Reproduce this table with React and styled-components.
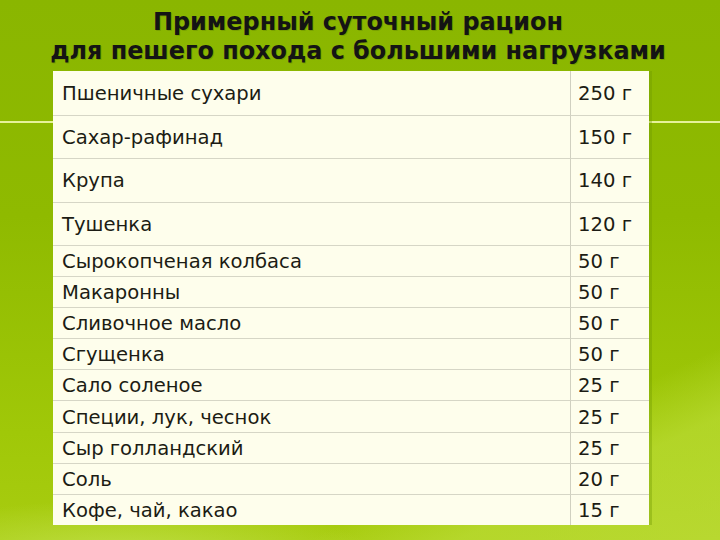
import React from "react";
import styled, { createGlobalStyle } from "styled-components";

const Global = createGlobalStyle`
  html, body { margin: 0; padding: 0; }
  body { width: 720px; height: 540px; overflow: hidden; }
`;

const Page = styled.div`
  width: 720px;
  height: 540px;
  box-sizing: border-box;
  padding-top: 8px;
  display: flex;
  flex-direction: column;
  background:
    linear-gradient(to bottom, transparent 121px, rgba(240, 248, 170, 0.9) 121px, rgba(240, 248, 170, 0.9) 123px, transparent 123px),
    radial-gradient(ellipse 260px 60px at 120px 560px, rgba(200, 230, 90, 0.75), transparent),
    linear-gradient(155deg, transparent 78%, rgba(190, 222, 60, 0.6) 86%, rgba(200, 228, 80, 0.5) 100%),
    linear-gradient(180deg, #8ab600 0%, #8fba00 40%, #a0c808 80%, #a8cc10 100%);
  font-family: "DejaVu Sans", Verdana, sans-serif;
`;

const Title = styled.h1`
  margin: 0;
  width: 716px;
  font-family: "DejaVu Sans", Verdana, sans-serif;
  font-weight: bold;
  font-size: 23.9px;
  line-height: 29px;
  text-align: center;
  color: #141414;
  text-shadow: 1px 1px 0 rgba(70, 95, 0, 0.25);
`;

const Table = styled.div`
  margin: 5px 0 0 53px;
  width: 596px;
  background: #fefeec;
  display: grid;
  grid-template-columns: 517px 79px;
  box-shadow: 3px 0 0 rgba(110, 150, 0, 0.35);
`;

const Cell = styled.div`
  height: ${(p) => p.$h}px;
  box-sizing: border-box;
  display: flex;
  align-items: center;
  padding-left: ${(p) => (p.$value ? 7 : 9)}px;
  padding-top: 1px;
  font-size: 19.6px;
  color: #1c1c14;
  white-space: nowrap;
  border-top: ${(p) => (p.$first ? "none" : "1px solid #d6d6c6")};
  border-left: ${(p) => (p.$value ? "1px solid #d0d0c0" : "none")};
`;

const rows = [
  ["Пшеничные сухари", "250 г"],
  ["Сахар-рафинад", "150 г"],
  ["Крупа", "140 г"],
  ["Тушенка", "120 г"],
  ["Сырокопченая колбаса", "50 г"],
  ["Макаронны", "50 г"],
  ["Сливочное масло", "50 г"],
  ["Сгущенка", "50 г"],
  ["Сало соленое", "25 г"],
  ["Специи, лук, чеснок", "25 г"],
  ["Сыр голландский", "25 г"],
  ["Соль", "20 г"],
  ["Кофе, чай, какао", "15 г"],
];

export default function App() {
  return (
    <>
      <Global />
      <Page>
        <Title>
          Примерный суточный рацион
          <br />
          для пешего похода с большими нагрузками
        </Title>
        <Table>
          {rows.map(([name, val], i) => {
            const h = i < 4 ? 43.5 : 31.1;
            return (
              <React.Fragment key={i}>
                <Cell $h={h} $first={i === 0}>{name}</Cell>
                <Cell $h={h} $first={i === 0} $value>{val}</Cell>
              </React.Fragment>
            );
          })}
        </Table>
      </Page>
    </>
  );
}
